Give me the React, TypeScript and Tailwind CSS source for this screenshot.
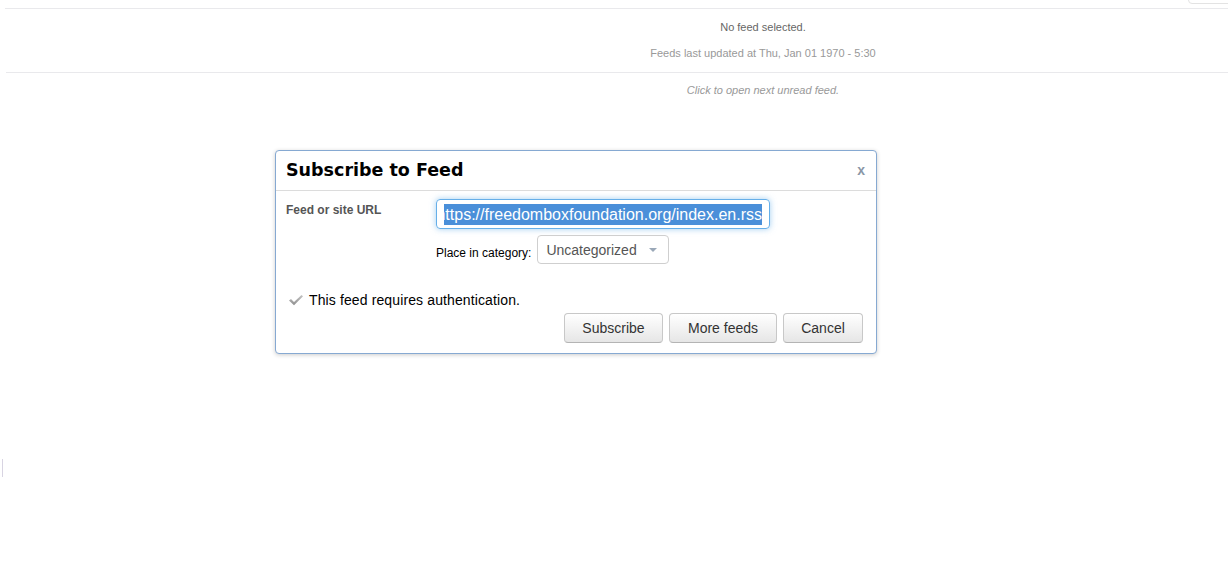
import React from "react";

function Check() {
  return (
    <svg width="16" height="12" viewBox="0 0 16 12" className="shrink-0">
      <defs>
        <linearGradient id="cg" x1="0" y1="0" x2="0" y2="1">
          <stop offset="0" stopColor="#c4c4c4" />
          <stop offset="1" stopColor="#8e8e8e" />
        </linearGradient>
      </defs>
      <path d="M1 6.5 L3 5 L6 8 L13.5 1 L15 2.3 L6 11.2 Z" fill="url(#cg)" />
    </svg>
  );
}

export default function App() {
  return (
    <div className="relative w-[1228px] h-[584px] bg-white overflow-hidden font-['Liberation_Sans',Arial,sans-serif]">
      {/* top-right little tab */}
      <div className="absolute right-[-4px] top-[-10px] w-[44px] h-[14px] border border-[#e3e3e3] rounded-[4px]" />
      <div className="ml-[5px] h-[9px] border-b border-[#e9e9ec]" />
      <div className="ml-[6px] h-[64px] border-b border-[#e9e9ec] pl-[292px] flex flex-col items-center">
        <div className="mt-[11px] text-[11px] leading-[14px] text-[#666]">No feed selected.</div>
        <div className="mt-[12px] text-[11px] leading-[14px] text-[#999]">
          Feeds last updated at Thu, Jan 01 1970 - 5:30
        </div>
      </div>
      <div className="ml-[6px] pl-[292px] flex justify-center">
        <div className="mt-[10px] text-[11px] leading-[14px] italic text-[#999]">
          Click to open next unread feed.
        </div>
      </div>
      <div className="absolute left-[2px] top-[459px] w-px h-[18px] bg-[#d8d4e2]" />

      {/* dialog */}
      <div className="absolute left-[275px] top-[150px] w-[602px] h-[204px] bg-white border border-[#86a9d2] rounded-[4px] shadow-[0_1px_4px_rgba(0,0,0,0.2)] flex flex-col">
        <div className="h-[40px] border-b border-[#dcdcdc] flex items-center justify-between pl-[10px] pr-[11px]">
          <div className="font-['DejaVu_Sans',sans-serif] font-bold text-[17.5px] text-black leading-none">
            Subscribe to Feed
          </div>
          <div className="text-[14px] font-bold text-[#8a96a6] leading-none mt-[-2px]">x</div>
        </div>
        <div className="flex pl-[10px] pt-[8px]">
          <div className="w-[150px] pt-[4px] text-[12px] font-bold text-[#555] leading-[14px]">
            Feed or site URL
          </div>
          <div className="flex flex-col">
            <div className="w-[334px] h-[30px] border border-[#66afe9] rounded-[4px] shadow-[0_0_6px_rgba(102,175,233,0.6)] flex items-center pl-[7px]">
              <div className="w-[318px] overflow-hidden flex justify-end">
                <span className="shrink-0 block whitespace-nowrap text-[16px] leading-[21px] text-white bg-[#4a8fd9]">
                  https://freedomboxfoundation.org/index.en.rss
                </span>
              </div>
            </div>
            <div className="flex items-center mt-[6px]">
              <span className="text-[12px] text-black leading-[14px] mt-[6px]">Place in category:</span>
              <div className="ml-[6px] w-[132px] h-[29px] border border-[#cfcfcf] rounded-[4px] flex items-center justify-between pl-[8px] pr-[11px]">
                <span className="text-[14px] text-[#555] mt-[2px]">Uncategorized</span>
                <svg width="8" height="4" viewBox="0 0 8 4">
                  <path d="M0 0 L8 0 L4 4 Z" fill="#9aa8b8" />
                </svg>
              </div>
            </div>
          </div>
        </div>
        <div className="flex items-center pl-[12px] mt-[28px] gap-[5px]">
          <Check />
          <span className="text-[14px] text-black leading-[16px] tracking-[0.12px]">This feed requires authentication.</span>
        </div>
        <div className="flex justify-end gap-[6px] pr-[13px] mt-[5px]">
          <button className="w-[99px] h-[30px] rounded-[4px] border border-[#c8c8c8] border-b-[#b4b4b4] bg-gradient-to-b from-white to-[#e6e6e6] text-[14px] text-[#333]">
            Subscribe
          </button>
          <button className="w-[108px] h-[30px] rounded-[4px] border border-[#c8c8c8] border-b-[#b4b4b4] bg-gradient-to-b from-white to-[#e6e6e6] text-[14px] text-[#333]">
            More feeds
          </button>
          <button className="w-[80px] h-[30px] rounded-[4px] border border-[#c8c8c8] border-b-[#b4b4b4] bg-gradient-to-b from-white to-[#e6e6e6] text-[14px] text-[#333]">
            Cancel
          </button>
        </div>
      </div>
    </div>
  );
}
